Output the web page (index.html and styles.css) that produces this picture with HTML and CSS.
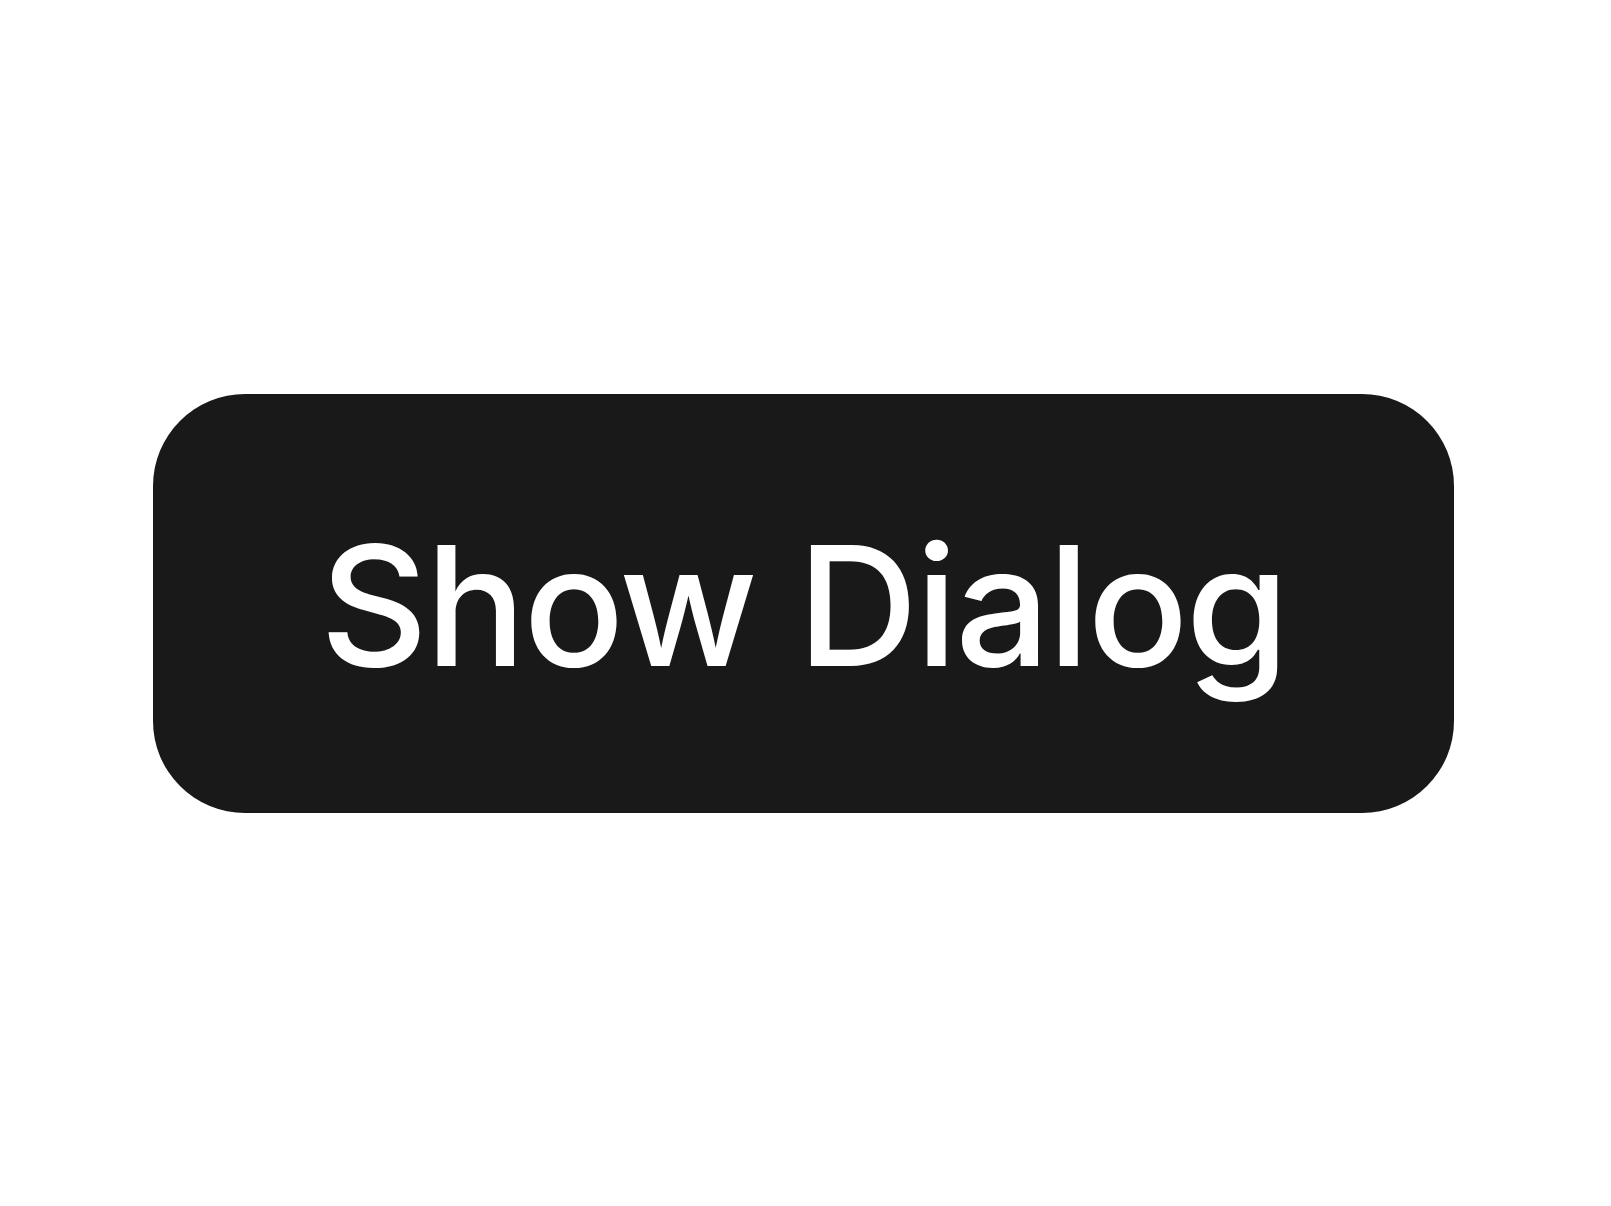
FILE: index.html
```html
<!DOCTYPE html>
<html>
<head>
<meta charset="utf-8">
<link rel="stylesheet" href="styles.css">
</head>
<body>
<main class="stage">
  <button class="btn">Show Dialog</button>
</main>
</body>
</html>
```
FILE: styles.css
```css
html, body {
  margin: 0;
  padding: 0;
  background: #ffffff;
}
.stage {
  box-sizing: border-box;
  width: 100vw;
  height: 100vh;
  padding-right: 4px;
  display: flex;
  align-items: center;
  justify-content: center;
}
.btn {
  box-sizing: border-box;
  width: 1301px;
  height: 419px;
  border: none;
  border-radius: 92px;
  background: #191919;
  color: #ffffff;
  font-family: Inter, "Noto Sans", sans-serif;
  font-weight: 500;
  font-size: 167px;
  letter-spacing: -2.4px;
  display: flex;
  align-items: center;
  justify-content: center;
  padding: 4px 0 0 0;
  margin: 0;
}
```
